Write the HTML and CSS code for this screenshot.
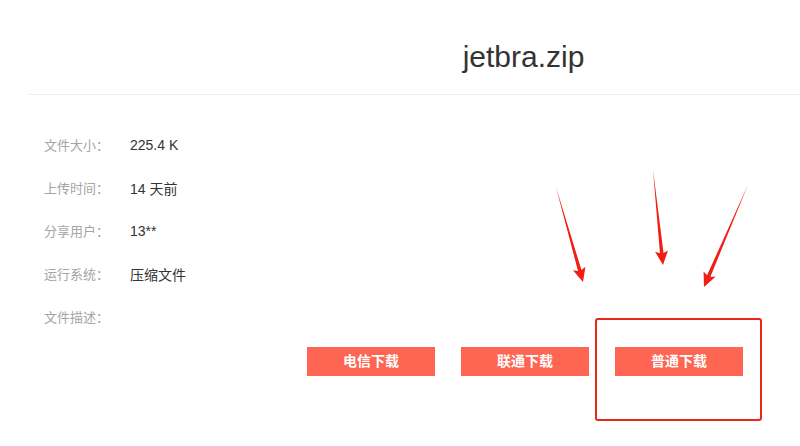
FILE: index.html
```html
<!DOCTYPE html>
<html lang="zh-CN">
<head>
    <meta charset="UTF-8">
    <meta name="viewport" content="width=device-width, initial-scale=1.0">
    <title>jetbra.zip</title>
    <link rel="stylesheet" href="styles.css">
</head>
<body>
    <div class="page">
        <div class="file-head">
            <h1>jetbra.zip</h1>
        </div>
        <ul class="file-info">
            <li><span class="label">文件大小：</span><span class="value">225.4 K</span></li>
            <li><span class="label">上传时间：</span><span class="value">14 天前</span></li>
            <li><span class="label">分享用户：</span><span class="value">13**</span></li>
            <li><span class="label">运行系统：</span><span class="value">压缩文件</span></li>
            <li><span class="label">文件描述：</span><span class="value"></span></li>
        </ul>
        <div class="downloads">
            <a class="btn" href="#">电信下载</a>
            <a class="btn" href="#">联通下载</a>
            <a class="btn" href="#">普通下载</a>
        </div>
    </div>

    <!-- annotation overlay -->
    <div class="mark-box"></div>
    <svg class="arrows" width="800" height="446" viewBox="0 0 800 446">
        <g fill="#f01e14">
            <g transform="translate(583,282) rotate(-15.9)">
                <polygon points="0,-99 1.8,-12 6.5,-14 0,0 -6.5,-14 -1.8,-12" />
            </g>
            <g transform="translate(663,265) rotate(-6)">
                <polygon points="0,-96 1.8,-12 6.5,-14 0,0 -6.5,-14 -1.8,-12" />
            </g>
            <g transform="translate(704,287) rotate(23.3)">
                <polygon points="0,-111 1.8,-12 6.5,-14 0,0 -6.5,-14 -1.8,-12" />
            </g>
        </g>
    </svg>
</body>
</html>
```

FILE: styles.css
```css
/* Global */
body {
    margin: 0;
    width: 800px;
    height: 446px;
    overflow: hidden;
    position: relative;
    background: #fff;
    font-family: 'Liberation Sans', 'Noto Sans CJK SC', sans-serif;
    color: #333;
}

.page {
    margin-left: 28px;
}

/* File title */
.file-head {
    padding: 42px 0 22px 219px;
    border-bottom: 1px solid #ececec;
    text-align: center;
}

.file-head h1 {
    margin: 0;
    font-size: 30px;
    line-height: 30px;
    font-weight: normal;
    color: #333;
}

/* Info rows */
.file-info {
    list-style: none;
    margin: 0;
    padding: 28px 0 0 16px;
}

.file-info li {
    display: flex;
    align-items: center;
    height: 43px;
}

.label {
    width: 86px;
    font-size: 13px;
    color: #a5a5a5;
}

.value {
    font-size: 14px;
    color: #333;
}

/* Download buttons */
.downloads {
    display: flex;
    gap: 26px;
    margin-top: 9px;
    padding-left: 279px;
}

.btn {
    width: 128px;
    height: 29px;
    line-height: 29px;
    text-align: center;
    background-color: #fe6553;
    color: #fff;
    font-size: 14px;
    font-weight: bold;
    text-decoration: none;
}

/* Annotation marks */
.mark-box {
    position: absolute;
    left: 595px;
    top: 318px;
    width: 163px;
    height: 99px;
    border: 2px solid #e8281d;
    border-radius: 3px;
}

.arrows {
    position: absolute;
    left: 0;
    top: 0;
}
```
